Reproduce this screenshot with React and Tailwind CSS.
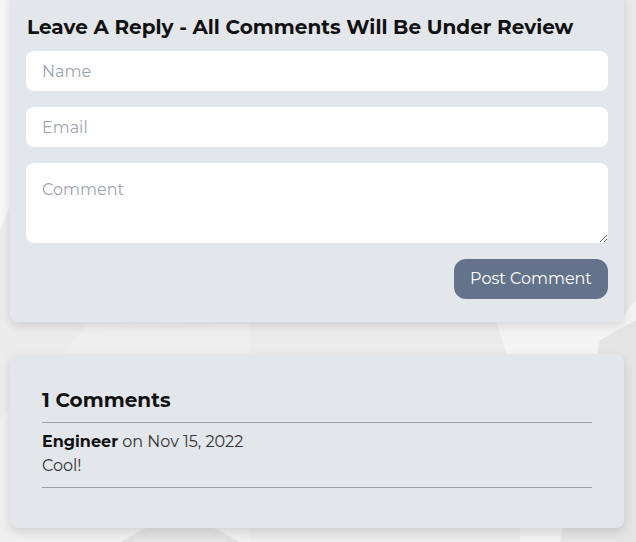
import { useState } from 'react'

const FONT = { fontFamily: '"Montserrat", "DejaVu Sans", "Noto Sans", sans-serif' }

function Backdrop() {
  return (
    <svg className="absolute inset-0 h-full w-full" viewBox="0 0 636 542" preserveAspectRatio="none" aria-hidden>
      <rect width="636" height="542" fill="#f1f1f1" />
      <polygon points="0,0 90,0 60,90 0,230" fill="#f6f6f6" />
      <polygon points="0,230 60,90 84,330 0,420" fill="#ececec" />
      <polygon points="84,330 250,320 250,542 0,542 0,420" fill="#efefef" />
      <polygon points="250,320 520,320 520,542 250,542" fill="#ebebeb" />
      <polygon points="490,300 636,280 636,420 520,400" fill="#f4f4f4" />
      <polygon points="600,340 636,320 636,542 560,542" fill="#e4e4e4" />
      <polygon points="180,510 240,542 120,542" fill="#e2e2e2" />
      <polygon points="620,0 636,0 636,300 620,320" fill="#e9e9e9" />
    </svg>
  )
}

export default function App() {
  const [form, setForm] = useState({ name: '', email: '', comment: '' })
  const set = (k) => (e) => setForm({ ...form, [k]: e.target.value })

  return (
    <div className="relative min-h-[542px] overflow-hidden text-[#111]" style={FONT}>
      <Backdrop />
      <div className="relative flex w-[614px] flex-col gap-8 pl-[10px] box-content">
        <section className="-mt-2 rounded-lg bg-[#e3e6eb] px-4 pb-[23px] pt-[21px] shadow-[0_4px_10px_rgba(0,0,0,0.12)]">
          <h2 className="mb-[10px] pl-px text-[20px] font-bold leading-7">
            Leave A Reply - All Comments Will Be Under Review
          </h2>
          <div className="flex flex-col gap-4">
            <input
              value={form.name}
              onChange={set('name')}
              placeholder="Name"
              className="h-10 rounded-lg bg-white px-4 text-base outline-none placeholder:text-[#9ca3af]"
            />
            <input
              value={form.email}
              onChange={set('email')}
              placeholder="Email"
              className="h-10 rounded-lg bg-white px-4 text-base outline-none placeholder:text-[#9ca3af]"
            />
            <textarea
              value={form.comment}
              onChange={set('comment')}
              placeholder="Comment"
              className="h-20 rounded-lg bg-white px-4 pt-[15px] text-base leading-6 outline-none placeholder:text-[#9ca3af]"
            />
            <div className="flex justify-end">
              <button className="h-10 w-[154px] rounded-xl bg-[#65728b] text-base text-white">
                Post Comment
              </button>
            </div>
          </div>
        </section>

        <section className="rounded-lg bg-[#e3e6eb] px-8 pb-10 pt-8 shadow-[0_4px_10px_rgba(0,0,0,0.12)]">
          <h2 className="pb-2 text-[20px] font-bold leading-7">1 Comments</h2>
          <ul className="border-y border-[#9ca0aa]">
            <li className="pb-[9px] pt-[7px] text-base leading-6">
              <p>
                <span className="font-bold">Engineer</span>{' '}
                <span className="text-[#333]">on Nov 15, 2022</span>
              </p>
              <p className="text-[#333]">Cool!</p>
            </li>
          </ul>
        </section>
      </div>
    </div>
  )
}
